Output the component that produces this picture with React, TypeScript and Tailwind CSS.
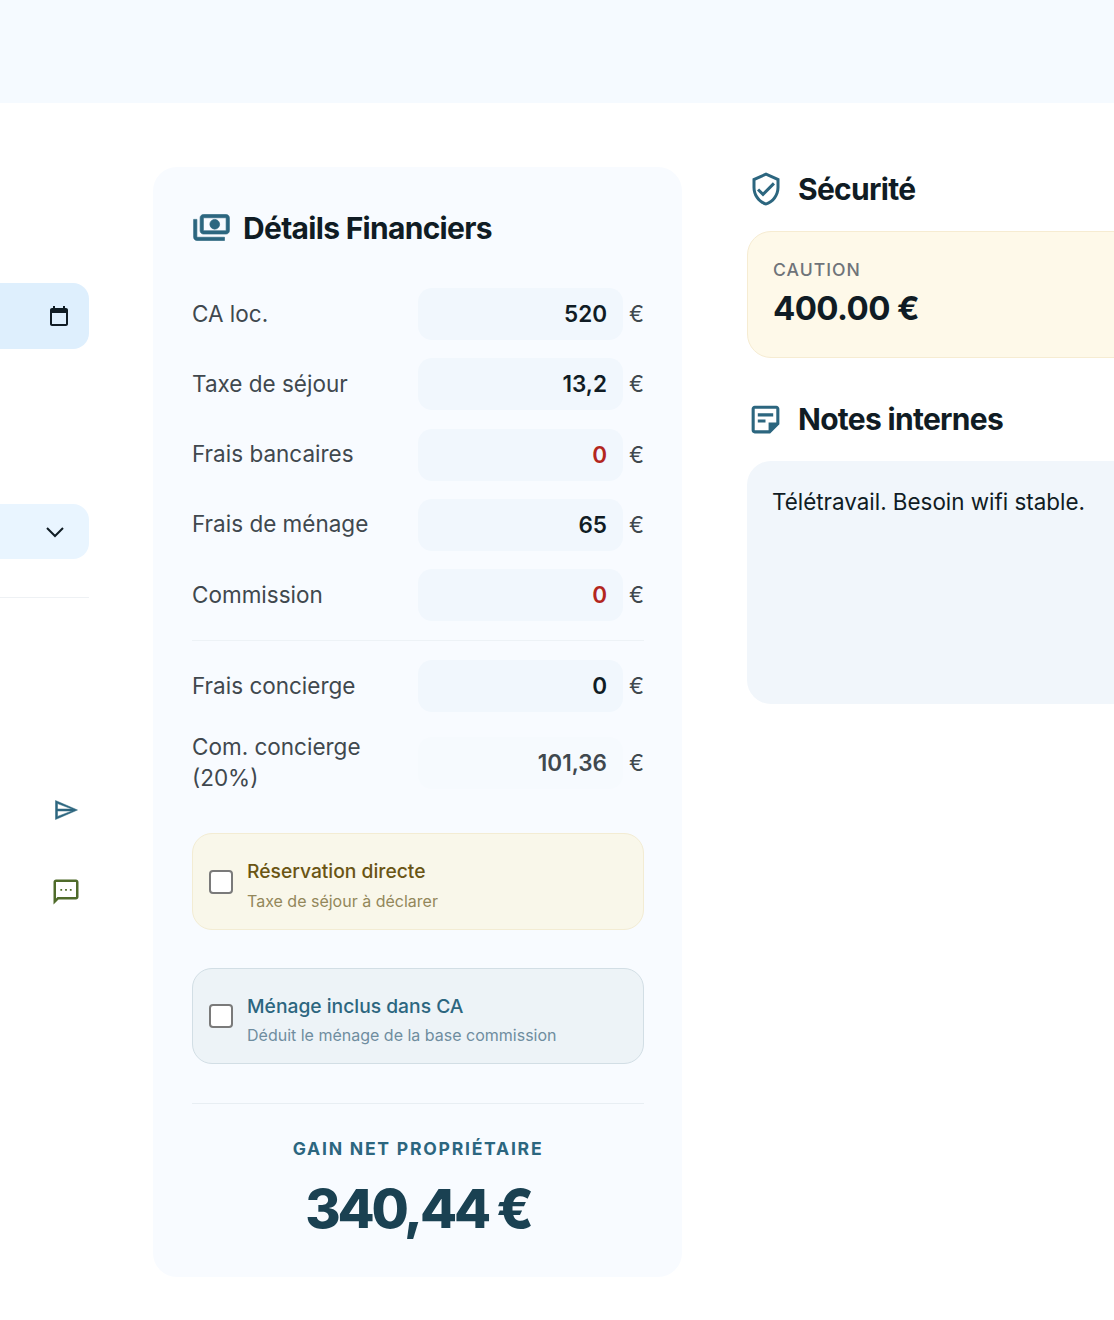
import React from 'react';

const font = { fontFamily: 'Inter, sans-serif' };

function Row({ label, value, tone = 'text-[#101c24]', faded = false }: { label: React.ReactNode; value: string; tone?: string; faded?: boolean }) {
  return (
    <div className="flex items-center">
      <div className="w-[226px] shrink-0 -mt-[2px] text-[22.5px] leading-[31px] text-[#40484e]">{label}</div>
      <div className={`w-[205px] shrink-0 h-[52px] rounded-[14px] flex items-center justify-end pr-[16px] text-[22.5px] font-semibold ${faded ? 'bg-[#f6fafe]' : 'bg-[#f1f7fd]'} ${tone}`}>
        {value}
      </div>
      <div className="ml-[6px] text-[22.5px] text-[#40484e]">€</div>
    </div>
  );
}

function Title({ icon, children }: { icon: React.ReactNode; children: React.ReactNode }) {
  return (
    <div className="flex items-center h-[40px]">
      <div className="w-[51px] flex items-center shrink-0">{icon}</div>
      <h2 className="text-[30px] font-bold tracking-[-0.7px] text-[#101c24]">{children}</h2>
    </div>
  );
}

function Check() {
  return <input type="checkbox" className="appearance-none w-[24px] h-[24px] shrink-0 rounded-[4px] border-2 border-[#7a7a7a] bg-white" />;
}

export default function App() {
  return (
    <div style={font} className="w-[1114px] h-[1320px] overflow-hidden bg-white">
      {/* Top band */}
      <div className="h-[103px] bg-[#f5faff]" />

      <div className="flex items-start pt-[64px]">
        {/* Sidebar, cut by the window */}
        <div className="w-[89px] shrink-0 flex flex-col">
          <div className="mt-[116px] h-[66px] rounded-r-[16px] bg-[#deeffd] flex items-center justify-end pr-[18px]">
            <svg width="24" height="24" viewBox="0 0 24 24" fill="#101c24">
              <path d="M19 4h-1V2h-2v2H8V2H6v2H5c-1.1 0-2 .9-2 2v14c0 1.1.9 2 2 2h14c1.1 0 2-.9 2-2V6c0-1.1-.9-2-2-2zm0 16H5V9h14v11z" />
            </svg>
          </div>
          <div className="mt-[155px] h-[55px] rounded-r-[16px] bg-[#e9f5ff] flex items-center justify-end pr-[22px]">
            <svg width="24" height="24" viewBox="0 0 24 24" fill="none" stroke="#101c24" strokeWidth="2">
              <path d="M4 8l8 8 8-8" />
            </svg>
          </div>
          <div className="mt-[38px] border-t border-[#eef1f4]" />
          <div className="mt-[200px] flex justify-end pr-[11px]">
            <svg width="24" height="24" viewBox="0 0 24 24" fill="#2c667f" stroke="#2c667f" strokeWidth="0.5" className="overflow-visible">
              <path fillRule="evenodd" d="M1.500 2.500v19L23.500 12 1.500 2.500zm2 3.100L17.900 11H3.500V5.600zM3.500 13h14.400L3.500 18.400V13z" />
            </svg>
          </div>
          <div className="mt-[55px] flex justify-end pr-[8px]">
            <svg width="30" height="30" viewBox="0 0 24 24" fill="#4f6b2a">
              <path d="M20 2H4c-1.1 0-1.99.9-1.99 2L2 22l4-4h14c1.1 0 2-.9 2-2V4c0-1.1-.9-2-2-2zm0 14H5.17L4 17.17V4h16v12z" />
              <path d="M7.5 9.500h1.400v1.400H7.500zM11.300 9.500h1.400v1.400h-1.400zM15.100 9.500h1.400v1.400h-1.400z" />
            </svg>
          </div>
        </div>

        {/* Financial details */}
        <div className="ml-[64px] w-[529px] h-[1110px] shrink-0 rounded-[24px] bg-[#f8fbff] pt-[41px] pl-[39px] pr-[38px]">
          <Title
            icon={
              <svg width="39" height="39" viewBox="0 0 24 24" fill="#2c667f" stroke="#2c667f" strokeWidth="0.4" className="-scale-x-100 -mt-[2px]">
                <path d="M19 14V6c0-1.1-.9-2-2-2H3c-1.1 0-2 .9-2 2v8c0 1.1.9 2 2 2h14c1.1 0 2-.9 2-2zm-2 0H3V6h14v8zm-7-7c-1.66 0-3 1.34-3 3s1.34 3 3 3 3-1.34 3-3-1.34-3-3-3zm13 0v11c0 1.1-.9 2-2 2H4v-2h17V7h2z" />
              </svg>
            }
          >
            Détails Financiers
          </Title>

          <div className="mt-[40px] flex flex-col gap-[18.3px]">
            <Row label="CA loc." value="520" />
            <Row label="Taxe de séjour" value="13,2" />
            <Row label="Frais bancaires" value="0" tone="text-[#b3261e]" />
            <Row label="Frais de ménage" value="65" />
            <Row label="Commission" value="0" tone="text-[#b3261e]" />
          </div>

          <div className="mt-[19px] border-t border-[#edf2f6]" />

          <div className="mt-[19px] flex flex-col gap-[21px]">
            <Row label="Frais concierge" value="0" />
            <Row label={<>Com. concierge<br />(20%)</>} value="101,36" tone="text-[#40484e]" faded />
          </div>

          <label className="mt-[40px] h-[97px] rounded-[20px] border border-[#f3ecd3] bg-[#f9f7ea] flex items-center pl-[16px]">
            <Check />
            <div className="ml-[14px] pt-[6px]">
              <div className="text-[19.250px] leading-[26px] font-medium text-[#6a5514]">Réservation directe</div>
              <div className="mt-[6px] text-[16px] leading-[22px] text-[#93875a]">Taxe de séjour à déclarer</div>
            </div>
          </label>

          <label className="mt-[38px] h-[96px] rounded-[20px] border border-[#d2dee5] bg-[#edf3f7] flex items-center pl-[16px]">
            <Check />
            <div className="ml-[14px] pt-[6px]">
              <div className="text-[19.250px] leading-[26px] font-medium text-[#2c667f]">Ménage inclus dans CA</div>
              <div className="mt-[5px] text-[16px] leading-[22px] text-[#6f8d9f]">Déduit le ménage de la base commission</div>
            </div>
          </label>

          <div className="mt-[39px] border-t border-[#e8eef3]" />

          <div className="mt-[33px] text-center text-[17.6px] leading-[24px] font-bold tracking-[1.75px] text-[#2c667f]">
            GAIN NET PROPRIÉTAIRE
          </div>
          <div className="mt-[15px] text-center text-[54px] leading-[66px] font-extrabold tracking-[-3.2px] text-[#1a4152]">
            340,44 €
          </div>
        </div>

        {/* Right column */}
        <div className="ml-[65px] w-[500px] shrink-0 pt-[2px]">
          <Title
            icon={
              <svg width="36" height="36" viewBox="0 0 24 24" fill="#2c667f" className="ml-[1px]">
                <path d="M12 1L3 5v6c0 5.55 3.84 10.74 9 12 5.16-1.26 9-6.45 9-12V5l-9-4zm7 10c0 4.52-2.98 8.69-7 9.93-4.02-1.24-7-5.41-7-9.93V6.3l7-3.11 7 3.11V11zm-11.59.59L6 13l4 4 8-8-1.41-1.42L10 14.17z" />
              </svg>
            }
          >
            Sécurité
          </Title>
          <div className="mt-[22px] h-[127px] rounded-[24px] border border-[#f6ecd2] bg-[#fef9e9] pl-[25px] pt-[26px]">
            <div className="text-[17.6px] leading-[24px] font-medium tracking-[1px] text-[#6f7479]">CAUTION</div>
            <div className="mt-[4px] text-[33px] leading-[44px] font-bold tracking-[-0.6px] text-[#101c24]">400.00 €</div>
          </div>

          <div className="mt-[41px]">
            <Title
              icon={
                <svg width="37" height="37" viewBox="0 0 24 24" fill="#2c667f">
                  <path d="M19 3H5C3.9 3 3 3.9 3 5v14c0 1.1.9 2 2 2h10l6-6V5c0-1.1-.9-2-2-2zm0 11h-5v5H5V5h14v9z" />
                  <path d="M15 15h5l-5 5zM12 14H7v-2h5v2zM17 10H7V8h10v2z" />
                </svg>
              }
            >
              Notes internes
            </Title>
          </div>
          <div className="mt-[22px] h-[243px] rounded-[24px] bg-[#f1f6fb] pl-[25px] pt-[25px] text-[22.4px] leading-[32px] text-[#101c24]">
            Télétravail. Besoin wifi stable.
          </div>
        </div>
      </div>
    </div>
  );
}
